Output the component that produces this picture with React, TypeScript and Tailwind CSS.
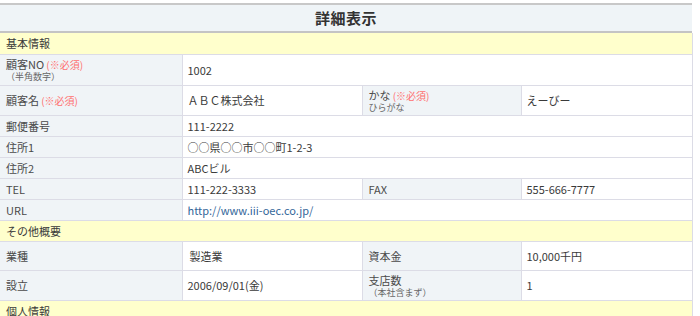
import React from "react";

type Cell = { label: React.ReactNode; value: React.ReactNode };

const Req = () => (
	<span className="text-[10px] text-[#ff7070]"> (※必須)</span>
);

const Sub = ({ children }: { children: React.ReactNode }) => (
	<div className="text-[9px] leading-[10px] text-[#666]">{children}</div>
);

function Section({ title, h }: { title: string; h: string }) {
	return (
		<tr className={h}>
			<td
				colSpan={4}
				className="bg-[#ffffcc] px-[6px] text-[11px] leading-[14px] text-[#3a3a3a] border-b border-[#dcdce6]"
			>
				{title}
			</td>
		</tr>
	);
}

function Row({ h, cells }: { h: string; cells: Cell[] }) {
	const full = cells.length === 1;
	return (
		<tr className={h}>
			{cells.map((c, i) => (
				<React.Fragment key={i}>
					<td className="bg-[#f0f4f7] px-[6px] py-0 align-middle border-b border-r border-[#dcdce6] text-[11px] text-[#4a4a4a] leading-[14px]">
						{c.label}
					</td>
					<td
						colSpan={full ? 3 : 1}
						className="bg-white px-[5px] py-0 align-middle border-b border-r border-[#dcdce6] text-[11px] leading-[14px] text-[#3a3a3a]"
					>
						{c.value}
					</td>
				</React.Fragment>
			))}
		</tr>
	);
}

export default function App() {
	return (
		<div
			className="w-[700px] h-[316px] bg-white overflow-hidden pt-[3px]"
			style={{ fontFamily: '"Noto Sans CJK JP", "Noto Sans", sans-serif' }}
		>
			<div className="w-[692px] border-t-2 border-[#c8c8c8] bg-[#eff4f7] h-[30px] flex items-center justify-center border-b-2 border-b-[#c4c4c4]">
				<h1 className="text-[15px] font-bold text-[#333] tracking-[0.5px]">詳細表示</h1>
			</div>
			<table className="w-[692px] border-collapse table-fixed border-r border-[#dcdce6]">
				<colgroup>
					<col className="w-[182px]" />
					<col className="w-[180px]" />
					<col className="w-[159px]" />
					<col className="w-[171px]" />
				</colgroup>
				<tbody>
					<Section title="基本情報" h="h-[21px]" />
					<Row
						h="h-[31px]"
						cells={[
							{
								label: (
									<>
										<div className="leading-[15px]">
											顧客NO
											<Req />
										</div>
										<Sub>（半角数字）</Sub>
									</>
								),
								value: "1002",
							},
						]}
					/>
					<Row
						h="h-[30px]"
						cells={[
							{
								label: (
									<>
										顧客名
										<Req />
									</>
								),
								value: "ＡＢＣ株式会社",
							},
							{
								label: (
									<>
										<div className="leading-[15px]">
											かな
											<Req />
										</div>
										<Sub>ひらがな</Sub>
									</>
								),
								value: "えーびー",
							},
						]}
					/>
					<Row h="h-[21px]" cells={[{ label: "郵便番号", value: "111-2222" }]} />
					<Row h="h-[21px]" cells={[{ label: "住所1", value: "○○県○○市○○町1-2-3" }]} />
					<Row h="h-[21px]" cells={[{ label: "住所2", value: "ABCビル" }]} />
					<Row
						h="h-[21px]"
						cells={[
							{ label: "TEL", value: "111-222-3333" },
							{ label: "FAX", value: "555-666-7777" },
						]}
					/>
					<Row
						h="h-[21px]"
						cells={[
							{
								label: "URL",
								value: (
									<a href="#" className="text-[#336699]">
										http://www.iii-oec.co.jp/
									</a>
								),
							},
						]}
					/>
					<Section title="その他概要" h="h-[21px]" />
					<Row
						h="h-[29px]"
						cells={[
							{ label: "業種", value: <span className="pl-[2px]">製造業</span> },
							{ label: "資本金", value: "10,000千円" },
						]}
					/>
					<Row
						h="h-[30px]"
						cells={[
							{ label: "設立", value: "2006/09/01(金)" },
							{
								label: (
									<>
										<div className="leading-[15px]">支店数</div>
										<Sub>（本社含まず）</Sub>
									</>
								),
								value: "1",
							},
						]}
					/>
					<Section title="個人情報" h="h-[21px]" />
				</tbody>
			</table>
		</div>
	);
}
